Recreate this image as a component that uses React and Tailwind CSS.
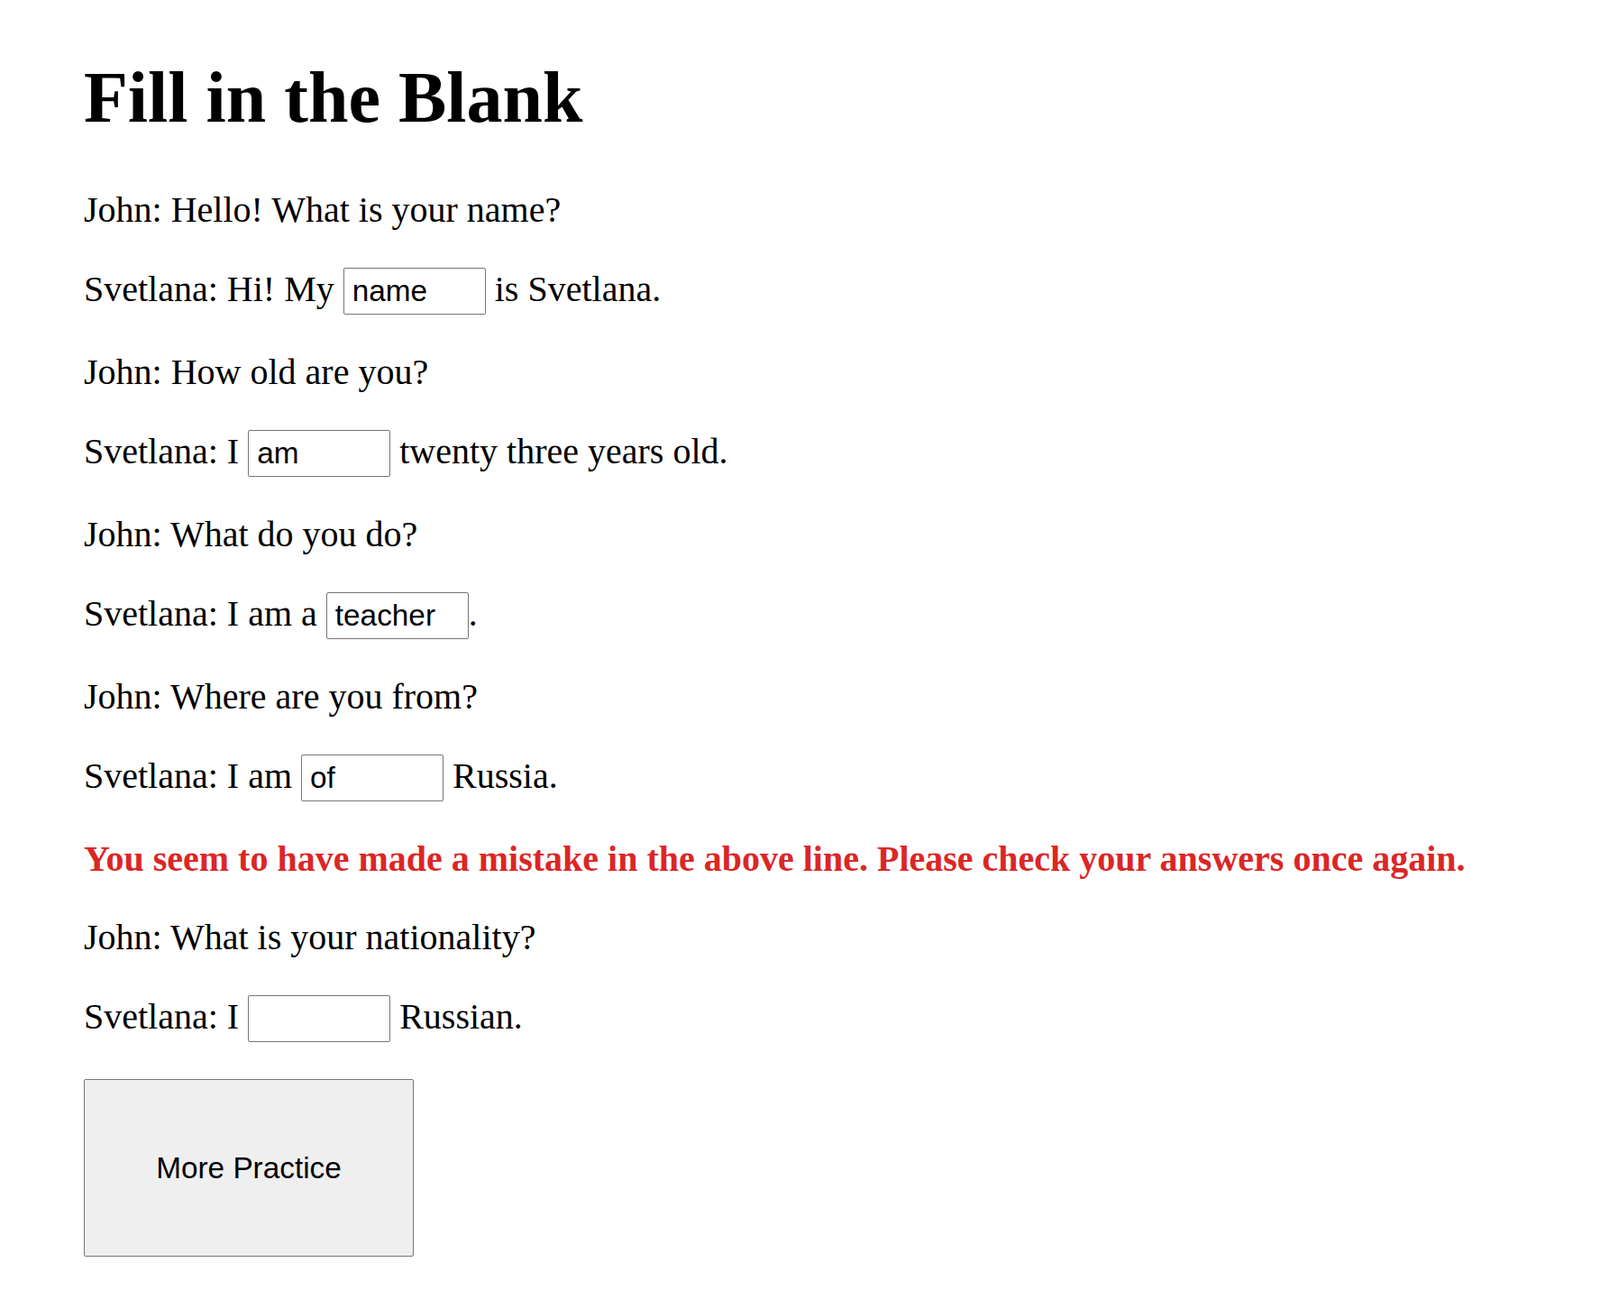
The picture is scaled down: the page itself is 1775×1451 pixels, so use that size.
import React, { useState } from "react";

const lines = [
  { speaker: "John", text: "Hello! What is your name?" },
  { speaker: "Svetlana", before: "Hi! My", answer: "name", after: "is Svetlana." },
  { speaker: "John", text: "How old are you?" },
  { speaker: "Svetlana", before: "I", answer: "am", after: "twenty three years old." },
  { speaker: "John", text: "What do you do?" },
  { speaker: "Svetlana", before: "I am a", answer: "teacher", after: ".", tight: true },
  { speaker: "John", text: "Where are you from?" },
  { speaker: "Svetlana", before: "I am", answer: "of", after: "Russia.", error: true },
  { speaker: "John", text: "What is your nationality?" },
  { speaker: "Svetlana", before: "I", answer: "", after: "Russian." },
];

function Blank({ value, onChange }) {
  return (
    <input
      type="text"
      value={value}
      onChange={(e) => onChange(e.target.value)}
      className="inline-block w-[158px] h-[52px] align-baseline border border-[#767676] rounded-[2px] px-[9px] bg-white text-black text-[33.33px] leading-[38px] font-['Liberation_Sans',Arial,sans-serif] outline-none"
    />
  );
}

export default function App() {
  const [answers, setAnswers] = useState(lines.map((l) => l.answer || ""));

  const setAnswer = (i, v) =>
    setAnswers((prev) => prev.map((a, idx) => (idx === i ? v : a)));

  return (
    <div className="min-h-screen bg-white text-black pt-[62px] px-[93px] font-['Liberation_Serif','Times_New_Roman',serif]">
      <h1 className="text-[80px] font-bold leading-[92px] mb-[56px]">Fill in the Blank</h1>

      <div className="flex flex-col gap-[41px] text-[40px] leading-[46px]">
        {lines.map((l, i) => (
          <React.Fragment key={i}>
            {l.text ? (
              <p>
                {l.speaker}: {l.text}
              </p>
            ) : (
              <p>
                {l.speaker}: {l.before}{" "}
                <Blank value={answers[i]} onChange={(v) => setAnswer(i, v)} />
                {l.tight ? l.after : " " + l.after}
              </p>
            )}
            {l.error && (
              <p className="font-bold text-[#dc2626]">
                You seem to have made a mistake in the above line. Please check your answers once again.
              </p>
            )}
          </React.Fragment>
        ))}

        <div>
          <button className="w-[366px] h-[197px] bg-[#efefef] border border-[#767676] rounded-[2px] text-[33.33px] font-['Liberation_Sans',Arial,sans-serif] text-black">
            More Practice
          </button>
        </div>
      </div>
    </div>
  );
}
